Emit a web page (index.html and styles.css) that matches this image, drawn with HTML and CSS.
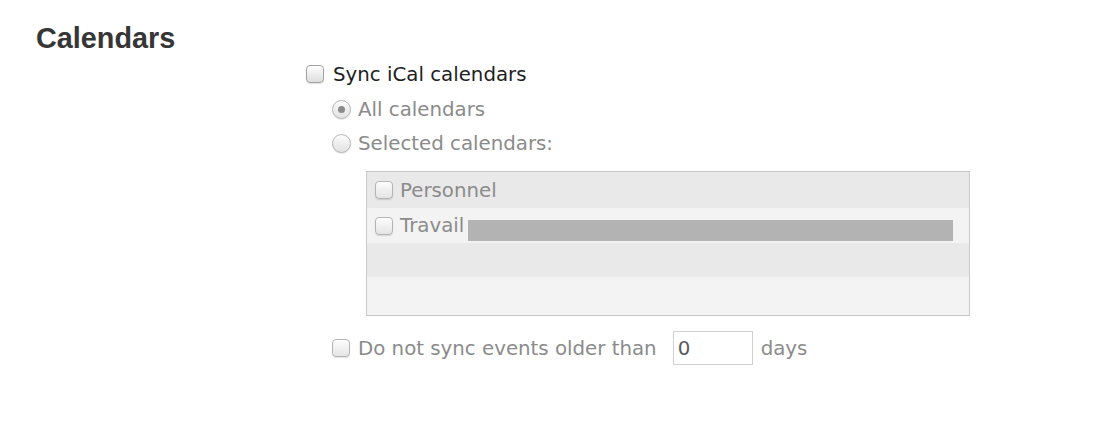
FILE: index.html
```html
<!DOCTYPE html>
<html lang="en">
  <head>
    <meta charset="UTF-8" />
    <title>Calendars</title>
    <link rel="stylesheet" href="styles.css">
  </head>
  <body>
    <div class="pane">
      <h2 class="section-title">Calendars</h2>

      <div class="options">
        <label class="check-row main-row">
          <span class="checkbox"></span>
          <span>Sync iCal calendars</span>
        </label>

        <div class="sub-options">
          <label class="radio-row">
            <span class="radio radio-on"></span>
            <span>All calendars</span>
          </label>
          <label class="radio-row">
            <span class="radio"></span>
            <span>Selected calendars:</span>
          </label>

          <div class="cal-list">
            <div class="cal-row">
              <span class="checkbox"></span>
              <span>Personnel</span>
            </div>
            <div class="cal-row">
              <span class="checkbox"></span>
              <span>Travail</span><span class="redacted"></span>
            </div>
            <div class="cal-row"></div>
            <div class="cal-row"></div>
          </div>

          <div class="check-row older-row">
            <span class="checkbox"></span>
            <span>Do not sync events older than</span>
            <input type="text" class="days-input" value="0" disabled />
            <span>days</span>
          </div>
        </div>
      </div>
    </div>
  </body>
</html>
```

FILE: styles.css
```css
:root {
  --text: #1e1e1e;
  --muted: #8b8b8b;
  --row-odd: #e9e9e9;
  --row-even: #f3f3f3;
  --line: #c8c8c8;
}

* {
  box-sizing: border-box;
  margin: 0;
  padding: 0;
}

body {
  background: #fff;
  font-family: "DejaVu Sans", Verdana, sans-serif;
  font-size: 19.8px;
  color: var(--text);
}

.pane {
  padding: 22px 0 0 36px;
}

.section-title {
  font-family: "Liberation Sans", Arial, sans-serif;
  font-size: 28.8px;
  line-height: 32px;
  font-weight: 700;
  color: #363636;
}

.options {
  margin: 8px 0 0 270px;
}

.check-row,
.radio-row {
  display: flex;
  align-items: center;
  height: 24px;
}

.main-row {
  gap: 9px;
}

.sub-options {
  margin: 6px 0 0 26px;
  color: var(--muted);
}

.radio-row {
  height: 34px;
  gap: 7px;
}

/* aqua style controls */
.checkbox {
  width: 18px;
  height: 18px;
  flex: none;
  border: 1px solid #a2a2a2;
  border-radius: 4px;
  background: linear-gradient(#ffffff, #ececec 55%, #dedede);
  box-shadow: inset 0 1px 0 #fff, 0 1px 1px rgba(0, 0, 0, 0.12);
}

.sub-options .checkbox {
  border-color: #b4b4b4;
  background: linear-gradient(#fdfdfd, #efefef 55%, #e4e4e4);
}

.radio {
  width: 19px;
  height: 19px;
  flex: none;
  border: 1px solid #b4b4b4;
  border-radius: 50%;
  background: linear-gradient(#fdfdfd, #ededed 55%, #e2e2e2);
  box-shadow: 0 1px 1px rgba(0, 0, 0, 0.1);
  display: flex;
  align-items: center;
  justify-content: center;
}

.radio-on::after {
  content: "";
  width: 7px;
  height: 7px;
  border-radius: 50%;
  background: #8a8a8a;
}

.cal-list {
  margin: 11px 0 0 34px;
  width: 604px;
  height: 145px;
  border: 1px solid var(--line);
  display: grid;
  grid-template-rows: 36px 35px 34px 1fr;
}

.cal-row {
  display: flex;
  align-items: center;
  gap: 7px;
  padding-left: 8px;
  background: var(--row-odd);
}

.cal-row:nth-child(even) {
  background: var(--row-even);
}

.redacted {
  width: 485px;
  height: 21px;
  margin: 10px 0 0 -3px;
  background: #b3b3b3;
}

.older-row {
  margin-top: 15px;
  height: 34px;
  gap: 8px;
}

.days-input {
  width: 80px;
  height: 34px;
  margin: 0 0 0 8px;
  padding: 0 4px;
  border: 1px solid #d0d0d0;
  background: #fff;
  font-family: inherit;
  font-size: inherit;
  color: #5a5a5a;
  outline: none;
}
```
